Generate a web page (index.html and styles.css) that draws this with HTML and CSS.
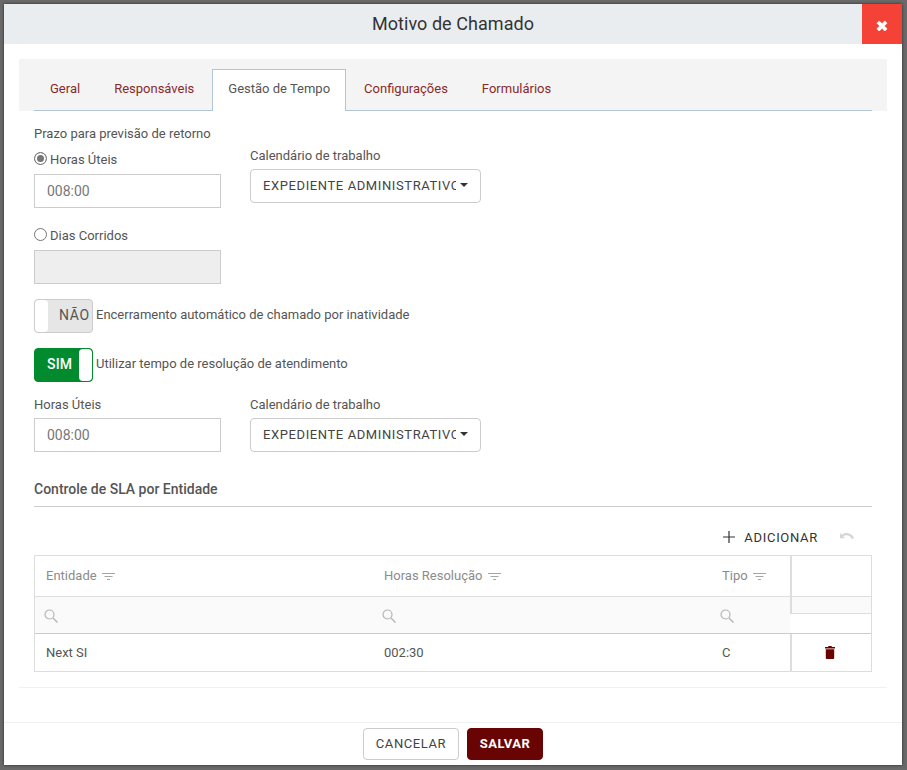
FILE: index.html
```html
<!DOCTYPE html>
<html lang="pt">
<head>
<meta charset="utf-8">
<title>Motivo de Chamado</title>
<link rel="stylesheet" href="styles.css">
</head>
<body>
<div class="modal">
  <header class="modal-header">
    <h1 class="modal-title">Motivo de Chamado</h1>
    <button class="close-btn" aria-label="Fechar">
      <svg width="12" height="12" viewBox="0 0 12 12"><path d="M1 3.2 3.2 1 6 3.8 8.8 1 11 3.2 8.2 6 11 8.8 8.8 11 6 8.2 3.2 11 1 8.8 3.8 6Z" fill="#fff" stroke="#fff" stroke-width=".8" stroke-linejoin="round"/></svg>
    </button>
  </header>
  <main class="modal-body">
    <div class="tab-strip">
      <nav class="tabs">
        <a class="tab">Geral</a>
        <a class="tab">Responsáveis</a>
        <a class="tab active">Gestão de Tempo</a>
        <a class="tab">Configurações</a>
        <a class="tab">Formulários</a>
      </nav>
    </div>
    <section class="pane">
      <div class="label-top">Prazo para previsão de retorno</div>
      <div class="row row-first">
        <div class="col">
          <label class="radio-label"><span class="radio checked"></span>Horas Úteis</label>
          <div class="input">008:00</div>
        </div>
        <div class="col col-cal">
          <div class="field-label">Calendário de trabalho</div>
          <div class="select"><span class="select-text">EXPEDIENTE ADMINISTRATIVO</span><span class="caret"></span></div>
        </div>
      </div>
      <label class="radio-label dias"><span class="radio"></span>Dias Corridos</label>
      <div class="input disabled"></div>

      <div class="toggle-row toggle-off">
        <div class="toggle off"><span class="knob"></span><span class="toggle-text">NÃO</span></div>
        <span class="toggle-label">Encerramento automático de chamado por inatividade</span>
      </div>
      <div class="toggle-row toggle-on">
        <div class="toggle on"><span class="toggle-text">SIM</span><span class="knob"></span></div>
        <span class="toggle-label">Utilizar tempo de resolução de atendimento</span>
      </div>

      <div class="row row-second">
        <div class="col">
          <div class="field-label">Horas Úteis</div>
          <div class="input">008:00</div>
        </div>
        <div class="col col-cal">
          <div class="field-label">Calendário de trabalho</div>
          <div class="select"><span class="select-text">EXPEDIENTE ADMINISTRATIVO</span><span class="caret"></span></div>
        </div>
      </div>

      <h2 class="section-title">Controle de SLA por Entidade</h2>

      <div class="toolbar">
        <button class="add-btn">
          <svg width="12" height="12" viewBox="0 0 12 12"><path d="M6 0v12M0 6h12" stroke="#333" stroke-width="1.2" fill="none"/></svg>
          ADICIONAR
        </button>
        <svg class="undo" width="16" height="10" viewBox="0 0 16 10"><path d="M1 1v5.2h5.2L4.2 4.3C5.1 3.6 6.2 3.2 7.4 3.2c2.4 0 4.5 1.6 5.3 3.8l2.3-.8C13.900 3 10.900.9 7.400.9 5.600.9 4 1.500 2.700 2.700Z" fill="#d6d6d6"/></svg>
      </div>

      <div class="grid">
        <div class="grid-main">
          <div class="grid-row head-row">
            <div class="cell c1">Entidade <svg class="funnel" width="13" height="8" viewBox="0 0 13 8"><path d="M0 .5h13M2.500 3.500h8M5 6.500h3" stroke="#a6a6a6" fill="none"/></svg></div>
            <div class="cell c2">Horas Resolução <svg class="funnel" width="13" height="8" viewBox="0 0 13 8"><path d="M0 .5h13M2.500 3.500h8M5 6.500h3" stroke="#a6a6a6" fill="none"/></svg></div>
            <div class="cell c3">Tipo <svg class="funnel" width="13" height="8" viewBox="0 0 13 8"><path d="M0 .5h13M2.500 3.500h8M5 6.500h3" stroke="#a6a6a6" fill="none"/></svg></div>
          </div>
          <div class="grid-row filter-row">
            <div class="cell c1"><svg class="search" width="14" height="14" viewBox="0 0 14 14"><circle cx="5.500" cy="5.500" r="4.500" fill="none" stroke="#b5b5b5" stroke-width="1.200"/><path d="M9 9l4.500 4.500" stroke="#b5b5b5" stroke-width="1.400"/></svg></div>
            <div class="cell c2"><svg class="search" width="14" height="14" viewBox="0 0 14 14"><circle cx="5.500" cy="5.500" r="4.500" fill="none" stroke="#b5b5b5" stroke-width="1.200"/><path d="M9 9l4.500 4.500" stroke="#b5b5b5" stroke-width="1.400"/></svg></div>
            <div class="cell c3"><svg class="search" width="14" height="14" viewBox="0 0 14 14"><circle cx="5.500" cy="5.500" r="4.500" fill="none" stroke="#b5b5b5" stroke-width="1.200"/><path d="M9 9l4.500 4.500" stroke="#b5b5b5" stroke-width="1.400"/></svg></div>
          </div>
          <div class="grid-row data-row">
            <div class="cell c1">Next SI</div>
            <div class="cell c2">002:30</div>
            <div class="cell c3">C</div>
          </div>
        </div>
        <div class="grid-side">
          <div class="side-head"></div>
          <div class="side-filter"></div>
          <div class="side-gap"></div>
          <div class="side-data">
            <svg width="10" height="13" viewBox="0 0 10 13"><path d="M3.500 0h3l.5 1h3v1.500H0V1h3ZM.8 3.300h8.400V12a1 1 0 0 1-1 1H1.800a1 1 0 0 1-1-1Z" fill="#6b0000"/></svg>
          </div>
        </div>
      </div>
    </section>
  </main>
  <footer class="modal-footer">
    <button class="btn btn-cancel">CANCELAR</button>
    <button class="btn btn-save">SALVAR</button>
  </footer>
</div>
</body>
</html>
```
FILE: styles.css
```css
* { box-sizing: border-box; }
html, body { height: 100%; }
body {
  margin: 0;
  padding: 4px 5px 5px 4px;
  background: #6a6a6a;
  font-family: Roboto, "Liberation Sans", sans-serif;
  font-size: 13px;
  color: #555;
}
.modal {
  height: 761px;
  background: #fff;
  display: flex;
  flex-direction: column;
  box-shadow: 0 0 3px rgba(0,0,0,.6);
}
.modal-header {
  height: 40px;
  flex: none;
  background: #eaedf0;
  display: flex;
  align-items: center;
  justify-content: center;
  position: relative;
  padding-bottom: 2px;
}
.modal-title {
  margin: 0;
  font-size: 18px;
  font-weight: 400;
  color: #333;
  letter-spacing: .05px;
}
.close-btn {
  position: absolute;
  top: 0;
  right: 0;
  width: 40px;
  height: 40px;
  border: 0;
  padding: 4px 0 0;
  background: #f44336;
  display: flex;
  align-items: center;
  justify-content: center;
}
.modal-body {
  flex: 1;
  padding: 15px 15px 0;
  min-height: 0;
}
.tab-strip {
  height: 52px;
  background: #f4f4f4;
  padding: 10px 15px 0;
}
.tabs {
  display: flex;
  height: 42px;
  border-bottom: 1px solid #b0c6d8;
}
.tab {
  height: 42px;
  padding: 0 15px;
  margin-right: 2px;
  line-height: 38px;
  border: 1px solid transparent;
  border-bottom: 0;
  color: #8a2a2a;
  font-size: 13px;
}
.active {
  background: #fff;
  border-color: #b0c6d8;
  color: #555;
}
.pane {
  padding: 15px 15px 0;
  height: 577px;
  border-bottom: 1px solid #f0f0f0;
}
.label-top { line-height: 16px; }
.row { display: flex; }
.row-first { margin-top: 9px; }
.row-second { margin-top: 14px; }
.col { width: 187px; }
.col-cal { margin-left: 29px; width: 231px; }
.row-first .col-cal { margin-top: -4px; }
.radio-label {
  display: flex;
  align-items: center;
  line-height: 18px;
}
.radio {
  width: 13px;
  height: 13px;
  border: 1px solid #767676;
  border-radius: 50%;
  margin: -4px 3px 0 0;
  background: #fff;
  flex: none;
}
.checked {
  background: #767676;
  box-shadow: inset 0 0 0 2px #fff;
}
.field-label { line-height: 18px; }
.input {
  width: 187px;
  height: 34px;
  margin-top: 5px;
  border: 1px solid #ccc;
  padding: 0 12px;
  line-height: 32px;
  font-size: 14px;
  color: #777;
}
.row-second .input { margin-top: 4px; }
.disabled { background: #eee; }
.dias { margin-top: 19px; }
.select {
  height: 34px;
  margin-top: 4px;
  width: 231px;
  border: 1px solid #ccc;
  border-radius: 4px;
  padding: 0 12px 2px;
  display: flex;
  align-items: center;
  font-size: 13px;
  color: #444;
  letter-spacing: .6px;
}
.select-text {
  width: 193px;
  overflow: hidden;
  white-space: nowrap;
  flex: none;
}
.caret {
  margin-left: 4px;
  border-top: 4px solid #333;
  border-left: 4px solid transparent;
  border-right: 4px solid transparent;
}
.toggle-row { display: flex; align-items: center; }
.toggle-off { margin-top: 15px; }
.toggle-on { margin-top: 15px; }
.toggle {
  width: 59px;
  height: 34px;
  border-radius: 4px;
  display: flex;
  align-items: center;
  font-size: 14px;
  flex: none;
  overflow: hidden;
}
.toggle .knob {
  width: 13px;
  height: 100%;
  background: #fff;
  border-radius: 4px;
  flex: none;
}
.off {
  background: #e6e6e6;
  border: 1px solid #ccc;
  color: #555;
  letter-spacing: .7px;
}
.off .toggle-text { margin: 0 0 3px 11px; }
.toggle-off .toggle-label { margin-bottom: 3px; }
.on {
  background: #028a2f;
  border: 1px solid #028a2f;
  color: #fff;
  font-weight: 500;
  letter-spacing: .2px;
  justify-content: space-between;
}
.on .toggle-text { margin: 0 0 3px 12px; }
.toggle-on .toggle-label { margin-bottom: 3px; }
.toggle-label { margin-left: 3px; }
.section-title {
  margin: 29px 0 0;
  padding-bottom: 9px;
  border-bottom: 1px solid #ccc;
  font-size: 14px;
  font-weight: 500;
  color: #555;
  line-height: 16px;
}
.toolbar {
  display: flex;
  justify-content: flex-end;
  align-items: center;
  height: 48px;
  padding: 12px 17px 0 0;
}
.add-btn {
  border: 0;
  background: none;
  padding: 0;
  font: 400 13px Roboto, sans-serif;
  letter-spacing: .7px;
  color: #333;
  display: flex;
  align-items: center;
  gap: 9px;
  margin-right: 21px;
}
.grid {
  display: flex;
  width: 838px;
  border: 1px solid #ddd;
}
.grid-main { width: 755px; }
.grid-row { display: flex; }
.cell { padding: 0 11px; }
.c1 { width: 338px; }
.c2 { width: 338px; }
.c3 { width: 79px; }
.head-row {
  height: 41px;
  align-items: center;
  color: #8c8c8c;
  border-bottom: 1px solid #ddd;
  padding-bottom: 2px;
}
.funnel { margin-left: 2px; vertical-align: -1px; }
.filter-row {
  height: 37px;
  align-items: center;
  background: #fafafa;
  border-bottom: 1px solid #ccc;
}
.search { display: block; margin: 2px 0 0 -2px; }
.data-row {
  height: 37px;
  align-items: center;
  color: #555;
  padding-bottom: 1px;
}
.grid-side { flex: 1; }
.side-head { height: 41px; border-left: 2px solid #ddd; border-bottom: 1px solid #ddd; }
.side-filter { height: 17px; background: #fafafa; border-left: 2px solid #ddd; border-bottom: 1px solid #ddd; }
.side-gap { height: 20px; border-bottom: 1px solid #ccc; }
.side-data {
  height: 37px;
  border-left: 2px solid #ddd;
  display: flex;
  align-items: center;
  justify-content: center;
  padding: 0 3px 1px 0;
}
.modal-footer {
  height: 43px;
  flex: none;
  border-top: 1px solid #f0f0f0;
  display: flex;
  justify-content: center;
  align-items: flex-start;
  gap: 8px;
  padding-top: 5px;
}
.btn {
  height: 32px;
  border-radius: 4px;
  font: 13px Roboto, sans-serif;
  letter-spacing: .6px;
  padding-bottom: 3px;
}
.btn-cancel {
  width: 96px;
  background: #fff;
  border: 1px solid #ccc;
  color: #444;
}
.btn-save {
  width: 76px;
  background: #680404;
  border: 1px solid #680404;
  color: #fff;
  font-weight: 700;
  letter-spacing: .5px;
}
```
